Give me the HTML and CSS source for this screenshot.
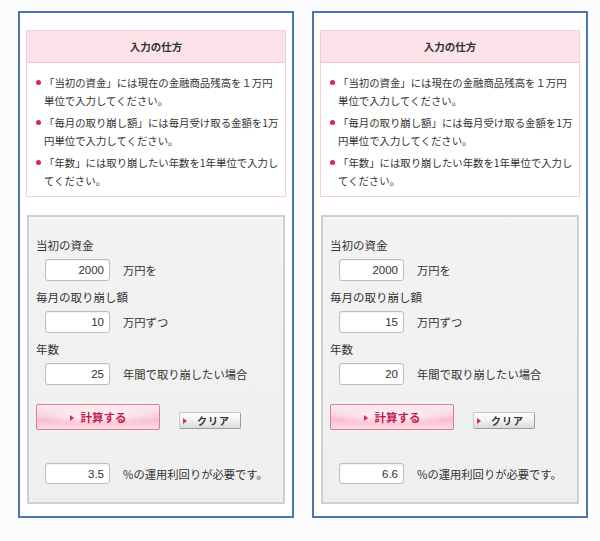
FILE: index.html
```html
<!DOCTYPE html>
<html lang="ja">
<head>
    <meta charset="UTF-8">
    <meta name="viewport" content="width=device-width, initial-scale=1.0">
    <title>取り崩し計算</title>
    <link rel="stylesheet" href="styles.css">
</head>
<body>
    <div class="page">
        <div class="panel">
            <div class="howto">
                <h2 class="howto-title">入力の仕方</h2>
                <ul class="howto-list">
                    <li>「当初の資金」には現在の金融商品残高を１万円単位で入力してください。</li>
                    <li>「毎月の取り崩し額」には毎月受け取る金額を1万円単位で入力してください。</li>
                    <li>「年数」には取り崩したい年数を1年単位で入力してください。</li>
                </ul>
            </div>
            <form class="calc">
                <div class="field-label">当初の資金</div>
                <div class="field-row"><input class="num" type="text" value="2000"><span class="unit">万円を</span></div>
                <div class="field-label">毎月の取り崩し額</div>
                <div class="field-row"><input class="num" type="text" value="10"><span class="unit">万円ずつ</span></div>
                <div class="field-label">年数</div>
                <div class="field-row"><input class="num" type="text" value="25"><span class="unit">年間で取り崩したい場合</span></div>
                <div class="btn-row">
                    <button type="button" class="btn-calc">計算する</button>
                    <button type="reset" class="btn-clear">クリア</button>
                </div>
                <div class="field-row result"><input class="num" type="text" value="3.5" readonly><span class="unit">%の運用利回りが必要です。</span></div>
            </form>
        </div>

        <div class="panel">
            <div class="howto">
                <h2 class="howto-title">入力の仕方</h2>
                <ul class="howto-list">
                    <li>「当初の資金」には現在の金融商品残高を１万円単位で入力してください。</li>
                    <li>「毎月の取り崩し額」には毎月受け取る金額を1万円単位で入力してください。</li>
                    <li>「年数」には取り崩したい年数を1年単位で入力してください。</li>
                </ul>
            </div>
            <form class="calc">
                <div class="field-label">当初の資金</div>
                <div class="field-row"><input class="num" type="text" value="2000"><span class="unit">万円を</span></div>
                <div class="field-label">毎月の取り崩し額</div>
                <div class="field-row"><input class="num" type="text" value="15"><span class="unit">万円ずつ</span></div>
                <div class="field-label">年数</div>
                <div class="field-row"><input class="num" type="text" value="20"><span class="unit">年間で取り崩したい場合</span></div>
                <div class="btn-row">
                    <button type="button" class="btn-calc">計算する</button>
                    <button type="reset" class="btn-clear">クリア</button>
                </div>
                <div class="field-row result"><input class="num" type="text" value="6.6" readonly><span class="unit">%の運用利回りが必要です。</span></div>
            </form>
        </div>
    </div>
</body>
</html>
```

FILE: styles.css
```css
body {
    margin: 0;
    background-color: #fbfcfe;
    font-family: "Noto Sans CJK JP", "Liberation Sans", sans-serif;
    color: #333;
}

.page {
    display: flex;
    align-items: flex-start;
    gap: 18px;
    padding: 11px 0 0 18px;
}

.panel {
    width: 276px;
    box-sizing: border-box;
    border: 2px solid #4d74b2;
    background-color: #fff;
    padding: 17px 6px 12px 6px;
}

/* how-to box */
.howto {
    border: 1px solid #f6cfd9;
    background-color: #fff;
}

.howto-title {
    margin: 0;
    height: 31px;
    line-height: 31px;
    text-align: center;
    font-size: 10.5px;
    font-weight: bold;
    background-color: #fde3e9;
    border-bottom: 1px solid #f5c6d2;
}

.howto-list {
    list-style: none;
    margin: 0;
    padding: 11px 0 6px 17px;
    width: 235px;
    font-size: 10.4px;
    line-height: 18px;
}

.howto-list li {
    position: relative;
    margin-top: 4px;
}

.howto-list li:first-child {
    margin-top: 0;
}

.howto-list li::before {
    content: "";
    position: absolute;
    left: -8px;
    top: 6px;
    width: 5px;
    height: 5px;
    border-radius: 50%;
    background-color: #d4245a;
}

/* form box */
.calc {
    margin: 18px 1px 0 1px;
    border: 2px solid #cfcfcf;
    background: linear-gradient(#f3f3f3, #efefef);
    padding: 18px 7px;
}

.field-label {
    font-size: 11.5px;
    line-height: 20px;
    margin-bottom: 4px;
}

.field-row {
    display: flex;
    align-items: center;
    margin-bottom: 6px;
    padding-left: 9px;
}

.num {
    width: 65px;
    height: 22px;
    box-sizing: border-box;
    border: 1px solid #bdbdbd;
    border-radius: 3px;
    background-color: #fff;
    box-shadow: inset 0 1px 1px rgba(0, 0, 0, 0.06);
    padding: 0 5px 0 0;
    text-align: right;
    font-family: "Liberation Sans", sans-serif;
    font-size: 11.5px;
    color: #333;
}

.unit {
    margin-left: 13px;
    font-size: 11.3px;
}

.btn-row {
    display: flex;
    align-items: flex-end;
    margin-top: 19px;
}

button {
    font-family: "Noto Sans CJK JP", sans-serif;
    font-weight: bold;
    cursor: pointer;
    padding: 0;
}

.btn-calc {
    width: 124px;
    height: 26px;
    border: 1px solid #e07a97;
    border-radius: 2px;
    background:
        radial-gradient(ellipse 55% 35% at 50% 45%, rgba(255, 255, 255, 0.95), rgba(255, 255, 255, 0) 100%),
        linear-gradient(#fdeef2, #fad6e0 35%, #f7bccd 60%, #fbdce5);
    color: #c8184d;
    font-size: 11.5px;
}

.btn-calc::before,
.btn-clear::before {
    content: "";
    display: inline-block;
    border-left: 4px solid #d62a5c;
    border-top: 3px solid transparent;
    border-bottom: 3px solid transparent;
    margin-right: 7px;
    vertical-align: 1px;
}

.btn-clear {
    margin-left: 19px;
    margin-bottom: 1px;
    width: 62px;
    height: 17px;
    border: 1px solid #c8c8c8;
    border-right-color: #9d9d9d;
    border-bottom-color: #9d9d9d;
    border-radius: 2px;
    background: linear-gradient(#ffffff, #f1f1f1 50%, #dadada);
    color: #333;
    font-size: 10px;
    letter-spacing: 1px;
    text-align: left;
    padding-left: 3px;
}

.btn-clear::before {
    margin-right: 10px;
}

.result {
    margin-top: 33px;
    margin-bottom: 0;
}

.result .num {
    height: 21px;
}
```
